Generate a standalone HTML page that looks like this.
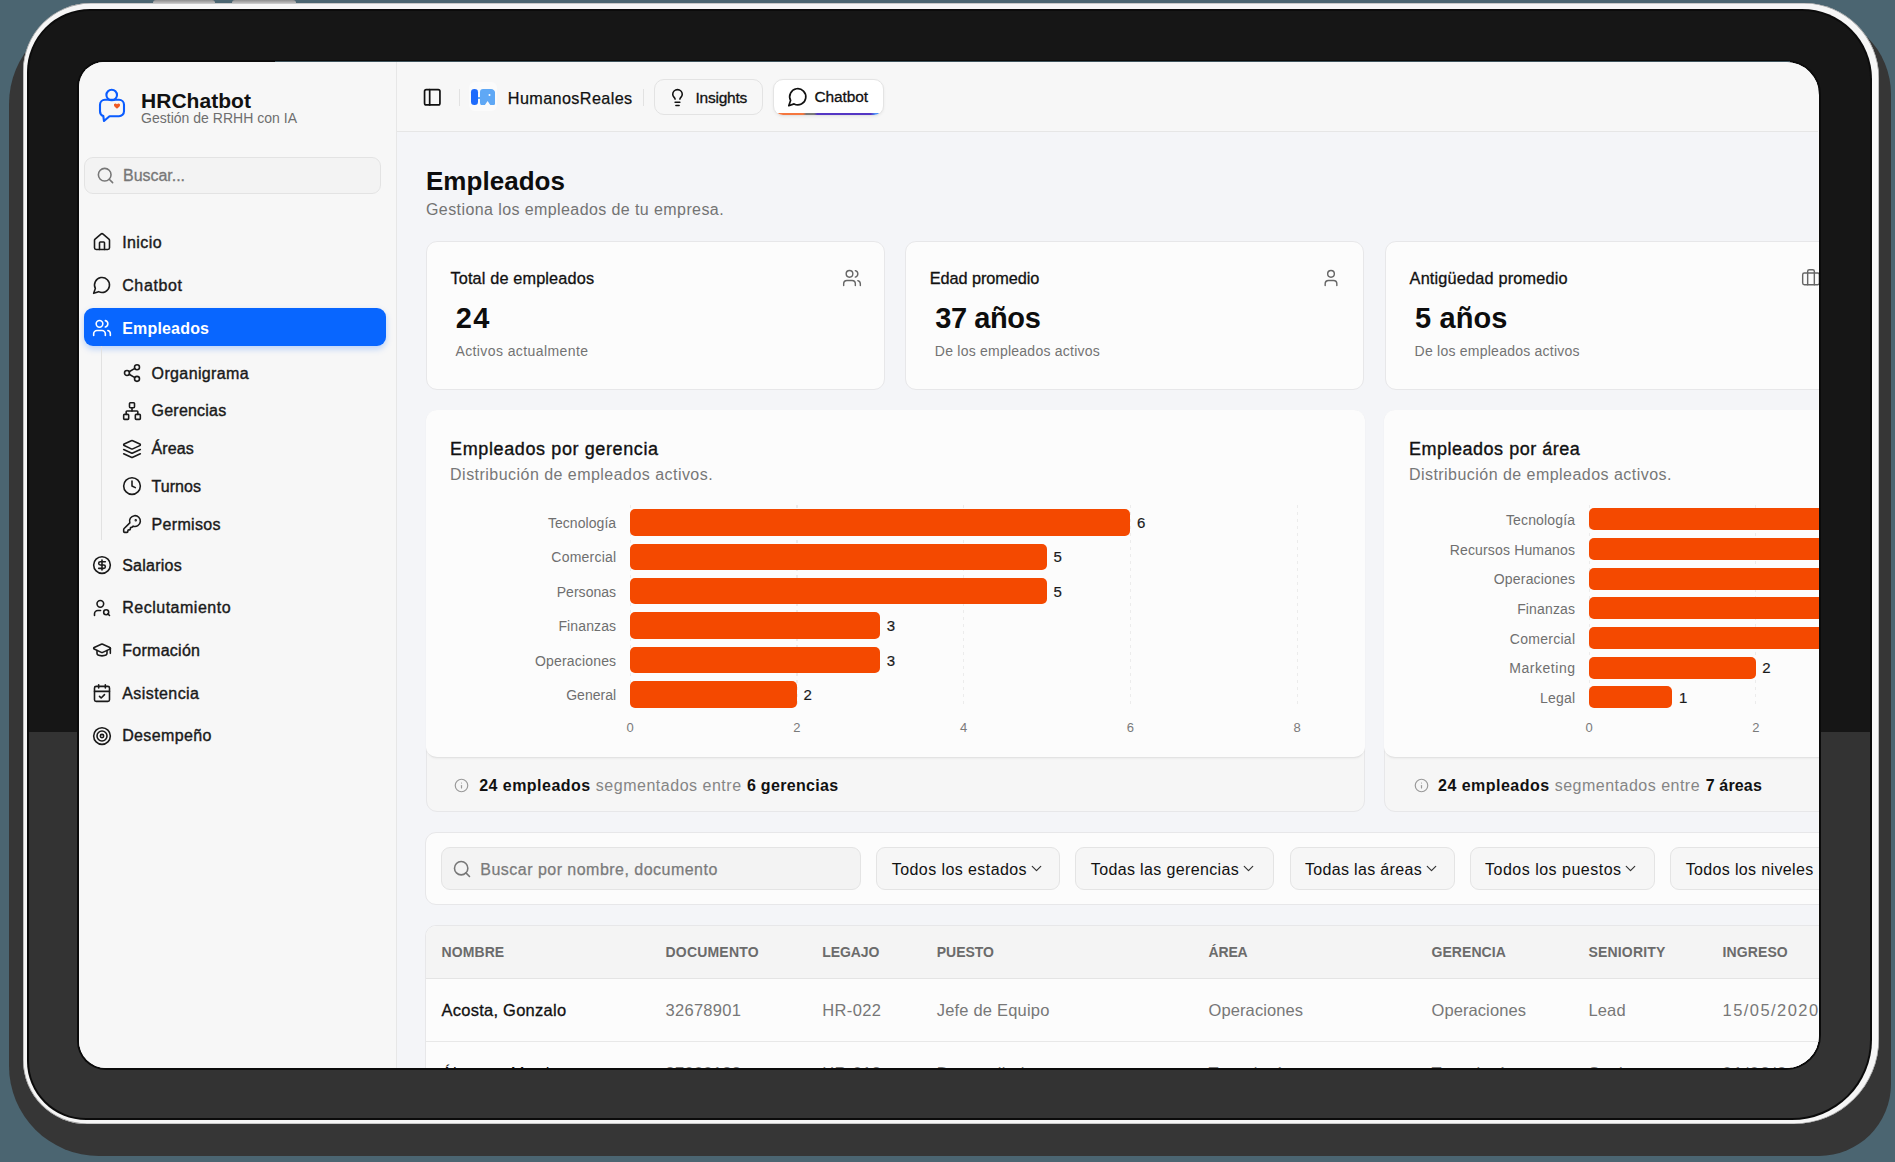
<!DOCTYPE html>
<html><head><meta charset="utf-8">
<style>
html,body{margin:0;padding:0;}
body{width:1895px;height:1162px;position:relative;overflow:hidden;background:#4b6571;font-family:"Liberation Sans",sans-serif;}
.t{position:absolute;white-space:nowrap;line-height:1;}
#shadow{position:absolute;left:8.5px;top:14px;width:1882.5px;height:1141.5px;border-radius:90px 80px 72px 90px;background:#363636;}
#rim{position:absolute;left:22.5px;top:3px;width:1856.5px;height:1121px;border-radius:68px 75px 85px 64px;background:#f6f6f6;box-shadow:inset 0 0 0 0.6px #9a9a9a;}
#bez{position:absolute;left:26.5px;top:8.5px;width:1845px;height:1111.5px;border-radius:63px 70px 80px 59px;background:#0b0b0b;overflow:hidden;}
#bez1{position:absolute;left:2px;top:2px;right:2px;bottom:2px;border-radius:61px 68px 78px 57px;background:linear-gradient(#161616 0,#161616 721.5px,#333 721.5px);}
#sring{position:absolute;left:76.5px;top:60px;width:1744px;height:1010px;border-radius:27px 35px 35px 29px;background:#0b0b0b;}
#screen{position:absolute;left:78.5px;top:62px;width:1740px;height:1006px;border-radius:25px 33px 33px 27px;overflow:hidden;background:#f7f7f7;}
#layer{position:absolute;left:-78.5px;top:-62px;width:1895px;height:1162px;}
</style></head><body>
<div id="shadow"></div>
<div style="position:absolute;left:153px;top:0;width:62px;height:5px;border-radius:3px 3px 0 0;background:linear-gradient(#8d8d8d,#d9d9d9);"></div>
<div style="position:absolute;left:232px;top:0;width:64px;height:5px;border-radius:3px 3px 0 0;background:linear-gradient(#8d8d8d,#d9d9d9);"></div>
<div id="rim"></div>
<div id="bez"><div id="bez1"></div></div>
<div id="sring"></div>
<div style="position:absolute;left:275px;top:61px;width:1515px;height:1px;background:#4b6571;opacity:0.8"></div>
<div id="screen"><div id="layer">
<div style="position:absolute;left:78px;top:62px;width:318.5px;height:1006px;background:#f7f7f7;"></div>
<div style="position:absolute;left:396px;top:62px;width:1px;height:1006px;background:#e7e7e7;"></div>
<div style="position:absolute;left:397px;top:62px;width:1421px;height:69px;background:#f7f7f7;"></div>
<div style="position:absolute;left:397px;top:130.5px;width:1421px;height:1px;background:#e6e6e6;"></div>
<div style="position:absolute;left:397px;top:131.5px;width:1421px;height:937px;background:#f4f5f8;"></div>
<svg style="position:absolute;left:96px;top:86px;width:32px;height:38px" viewBox="0 0 32 38" fill="none" stroke="#0a5cff" stroke-width="2.1" stroke-linejoin="round"><circle cx="15.7" cy="9" r="5.3"/><path d="M9 13.7 H23 a5 5 0 0 1 5 5 V25.2 a5 5 0 0 1 -5 5 H13.5 L8 35 L7.3 30 a5 5 0 0 1 -3.3 -4.8 V18.7 a5 5 0 0 1 5 -5 Z"/><path d="M21 18.3 c-1.2 -1.6 -3.6 -0.6 -3 1.2 c0.4 1.2 2 2.4 3 3.3 c1 -0.9 2.6 -2.1 3 -3.3 c0.6 -1.8 -1.8 -2.8 -3 -1.2z" fill="#f05a22" stroke="none"/></svg>
<div style="position:absolute;left:84px;top:156.5px;width:297px;height:37.5px;box-sizing:border-box;border:1px solid #e3e3e3;border-radius:9px;background:#f3f3f3;"></div>
<svg style="position:absolute;left:95.5px;top:166px;width:19px;height:19px;" viewBox="0 0 24 24" fill="none" stroke="#777" stroke-width="2" stroke-linecap="round" stroke-linejoin="round"><circle cx="11" cy="11" r="8"/><path d="m21 21-4.3-4.3"/></svg>
<svg style="position:absolute;left:92px;top:232.2px;width:20px;height:20px;" viewBox="0 0 24 24" fill="none" stroke="#1a1a1a" stroke-width="1.9" stroke-linecap="round" stroke-linejoin="round"><path d="M15 21v-8a1 1 0 0 0-1-1h-4a1 1 0 0 0-1 1v8"/><path d="M3 10a2 2 0 0 1 .709-1.528l7-5.999a2 2 0 0 1 2.582 0l7 5.999A2 2 0 0 1 21 10v9a2 2 0 0 1-2 2H5a2 2 0 0 1-2-2z"/></svg>
<svg style="position:absolute;left:92px;top:275.1px;width:20px;height:20px;" viewBox="0 0 24 24" fill="none" stroke="#1a1a1a" stroke-width="1.9" stroke-linecap="round" stroke-linejoin="round"><path d="M7.9 20A9 9 0 1 0 4 16.1L2 22Z"/></svg>
<div style="position:absolute;left:84px;top:308.2px;width:302px;height:38px;background:#0866ff;border-radius:9px;box-shadow:0 3px 6px rgba(8,102,255,0.25);"></div>
<svg style="position:absolute;left:92px;top:318.0px;width:20px;height:20px;" viewBox="0 0 24 24" fill="none" stroke="#ffffff" stroke-width="1.9" stroke-linecap="round" stroke-linejoin="round"><path d="M16 21v-2a4 4 0 0 0-4-4H6a4 4 0 0 0-4 4v2"/><circle cx="9" cy="7" r="4"/><path d="M22 21v-2a4 4 0 0 0-3-3.87"/><path d="M16 3.13a4 4 0 0 1 0 7.75"/></svg>
<div style="position:absolute;left:101px;top:346px;width:1px;height:194px;background:#e2e2e2;"></div>
<svg style="position:absolute;left:121.5px;top:363.0px;width:20px;height:20px;" viewBox="0 0 24 24" fill="none" stroke="#1a1a1a" stroke-width="1.9" stroke-linecap="round" stroke-linejoin="round"><circle cx="18" cy="5" r="3"/><circle cx="6" cy="12" r="3"/><circle cx="18" cy="19" r="3"/><line x1="8.59" x2="15.42" y1="13.51" y2="17.49"/><line x1="15.41" x2="8.59" y1="6.51" y2="10.49"/></svg>
<svg style="position:absolute;left:121.5px;top:400.8px;width:20px;height:20px;" viewBox="0 0 24 24" fill="none" stroke="#1a1a1a" stroke-width="1.9" stroke-linecap="round" stroke-linejoin="round"><rect x="16" y="16" width="6" height="6" rx="1"/><rect x="2" y="16" width="6" height="6" rx="1"/><rect x="9" y="2" width="6" height="6" rx="1"/><path d="M5 16v-3a1 1 0 0 1 1-1h12a1 1 0 0 1 1 1v3"/><path d="M12 12V8"/></svg>
<svg style="position:absolute;left:121.5px;top:438.5px;width:20px;height:20px;" viewBox="0 0 24 24" fill="none" stroke="#1a1a1a" stroke-width="1.9" stroke-linecap="round" stroke-linejoin="round"><path d="m12.83 2.18a2 2 0 0 0-1.66 0L2.6 6.08a1 1 0 0 0 0 1.83l8.58 3.91a2 2 0 0 0 1.66 0l8.58-3.9a1 1 0 0 0 0-1.83Z"/><path d="m22 17.65-9.17 4.16a2 2 0 0 1-1.66 0L2 17.65"/><path d="m22 12.65-9.17 4.16a2 2 0 0 1-1.66 0L2 12.65"/></svg>
<svg style="position:absolute;left:121.5px;top:476.3px;width:20px;height:20px;" viewBox="0 0 24 24" fill="none" stroke="#1a1a1a" stroke-width="1.9" stroke-linecap="round" stroke-linejoin="round"><circle cx="12" cy="12" r="10"/><polyline points="12 6 12 12 16 14"/></svg>
<svg style="position:absolute;left:121.5px;top:514.2px;width:20px;height:20px;" viewBox="0 0 24 24" fill="none" stroke="#1a1a1a" stroke-width="1.9" stroke-linecap="round" stroke-linejoin="round"><path d="M2.586 17.414A2 2 0 0 0 2 18.828V21a1 1 0 0 0 1 1h3a1 1 0 0 0 1-1v-1a1 1 0 0 1 1-1h1a1 1 0 0 0 1-1v-1a1 1 0 0 1 1-1h.172a2 2 0 0 0 1.414-.586l.814-.814a6.5 6.5 0 1 0-4-4z"/><circle cx="16.5" cy="7.5" r=".5" fill="currentColor"/></svg>
<svg style="position:absolute;left:92px;top:555.3px;width:20px;height:20px;" viewBox="0 0 24 24" fill="none" stroke="#1a1a1a" stroke-width="1.9" stroke-linecap="round" stroke-linejoin="round"><circle cx="12" cy="12" r="10"/><path d="M16 8h-6a2 2 0 1 0 0 4h4a2 2 0 1 1 0 4H8"/><path d="M12 18V6"/></svg>
<svg style="position:absolute;left:92px;top:597.8px;width:20px;height:20px;" viewBox="0 0 24 24" fill="none" stroke="#1a1a1a" stroke-width="1.9" stroke-linecap="round" stroke-linejoin="round"><circle cx="10" cy="7" r="4"/><path d="M10.3 15H7a4 4 0 0 0-4 4v2"/><circle cx="17" cy="17" r="3"/><path d="m21 21-1.9-1.9"/></svg>
<svg style="position:absolute;left:92px;top:640.0px;width:20px;height:20px;" viewBox="0 0 24 24" fill="none" stroke="#1a1a1a" stroke-width="1.9" stroke-linecap="round" stroke-linejoin="round"><path d="M21.42 10.922a1 1 0 0 0-.019-1.838L12.83 5.18a2 2 0 0 0-1.66 0L2.6 9.08a1 1 0 0 0 0 1.832l8.57 3.908a2 2 0 0 0 1.66 0z"/><path d="M22 10v6"/><path d="M6 12.5V16a6 3 0 0 0 12 0v-3.5"/></svg>
<svg style="position:absolute;left:92px;top:683.2px;width:20px;height:20px;" viewBox="0 0 24 24" fill="none" stroke="#1a1a1a" stroke-width="1.9" stroke-linecap="round" stroke-linejoin="round"><path d="M8 2v4"/><path d="M16 2v4"/><rect width="18" height="18" x="3" y="4" rx="2"/><path d="M3 10h18"/><path d="m9 16 2 2 4-4"/></svg>
<svg style="position:absolute;left:92px;top:725.7px;width:20px;height:20px;" viewBox="0 0 24 24" fill="none" stroke="#1a1a1a" stroke-width="1.9" stroke-linecap="round" stroke-linejoin="round"><circle cx="12" cy="12" r="10"/><circle cx="12" cy="12" r="6"/><circle cx="12" cy="12" r="2"/></svg>
<svg style="position:absolute;left:422.3px;top:86.8px;width:20.5px;height:20.5px;" viewBox="0 0 24 24" fill="none" stroke="#111" stroke-width="2" stroke-linecap="round" stroke-linejoin="round"><rect width="18" height="18" x="3" y="3" rx="2"/><path d="M9 3v18"/></svg>
<div style="position:absolute;left:458.5px;top:89px;width:1px;height:17px;background:#e2e2e2;"></div>
<div style="position:absolute;left:468.7px;top:82px;width:28.3px;height:28.7px;background:#fbfbfb;border-radius:6px;"></div>
<div style="position:absolute;left:471.2px;top:88.8px;width:6.6px;height:16.6px;background:#1f6cfc;border-radius:3.3px;"></div>
<div style="position:absolute;left:477.5px;top:96.5px;width:3px;height:2px;background:#5fa8f5;"></div>
<svg style="position:absolute;left:480px;top:88.8px;width:15.2px;height:16.6px" viewBox="0 0 15.2 16.6"><path d="M3 0 H11 a4.2 4.2 0 0 1 4.2 4.2 V13.6 a3 3 0 0 1 -3 3 a3 3 0 0 1 -2.6 -1.5 L7.6 12 L5.6 15.1 a3 3 0 0 1 -2.6 1.5 a3 3 0 0 1 -3 -3 V3 a3 3 0 0 1 3 -3z" fill="#5fa8f5"/><circle cx="9.5" cy="6" r="1" fill="#fff"/></svg>
<div style="position:absolute;left:642.5px;top:89px;width:1px;height:17px;background:#e2e2e2;"></div>
<div style="position:absolute;left:653.5px;top:78.5px;width:109px;height:36.5px;box-sizing:border-box;border:1px solid #e3e3e3;border-radius:10px;background:#f7f7f7;"></div>
<svg style="position:absolute;left:668px;top:87.5px;width:19px;height:19px;" viewBox="0 0 24 24" fill="none" stroke="#111" stroke-width="2" stroke-linecap="round" stroke-linejoin="round"><path d="M15 14c.2-1 .7-1.7 1.5-2.5 1-.9 1.5-2.2 1.5-3.5A6 6 0 0 0 6 8c0 1 .2 2.2 1.5 3.5.7.7 1.3 1.5 1.5 2.5"/><path d="M9 18h6"/><path d="M10 22h4"/></svg>
<div style="position:absolute;left:773.3px;top:78.6px;width:111px;height:37px;box-sizing:border-box;border:1px solid #e4e4e4;border-radius:10px;background:#ffffff;box-shadow:0 1px 3px rgba(0,0,0,0.06);overflow:hidden;"><div style="position:absolute;left:-1px;right:-1px;bottom:-1px;height:2.6px;background:linear-gradient(90deg,#f5773f 0%,#f5773f 27%,#7a7a7a 30%,#7a7a7a 37%,#5436c4 40%,#5436c4 88%,#4d8ff5 92%,#4d8ff5 100%);"></div></div>
<svg style="position:absolute;left:786.5px;top:85.5px;width:21.5px;height:21.5px;" viewBox="0 0 24 24" fill="none" stroke="#111" stroke-width="1.9" stroke-linecap="round" stroke-linejoin="round"><path d="M7.9 20A9 9 0 1 0 4 16.1L2 22Z"/></svg>
<div style="position:absolute;left:425.6px;top:241px;width:459.4px;height:149px;box-sizing:border-box;border:1px solid #e7e7e9;border-radius:11px;background:#fcfcfc;"></div>
<svg style="position:absolute;left:841.6px;top:267.5px;width:20px;height:20px;" viewBox="0 0 24 24" fill="none" stroke="#666" stroke-width="1.7" stroke-linecap="round" stroke-linejoin="round"><path d="M16 21v-2a4 4 0 0 0-4-4H6a4 4 0 0 0-4 4v2"/><circle cx="9" cy="7" r="4"/><path d="M22 21v-2a4 4 0 0 0-3-3.87"/><path d="M16 3.13a4 4 0 0 1 0 7.75"/></svg>
<div style="position:absolute;left:905px;top:241px;width:459px;height:149px;box-sizing:border-box;border:1px solid #e7e7e9;border-radius:11px;background:#fcfcfc;"></div>
<svg style="position:absolute;left:1321px;top:267.5px;width:20px;height:20px;" viewBox="0 0 24 24" fill="none" stroke="#666" stroke-width="1.7" stroke-linecap="round" stroke-linejoin="round"><path d="M19 21v-2a4 4 0 0 0-4-4H9a4 4 0 0 0-4 4v2"/><circle cx="12" cy="7" r="4"/></svg>
<div style="position:absolute;left:1384.8px;top:241px;width:515.2px;height:149px;box-sizing:border-box;border:1px solid #e7e7e9;border-radius:11px;background:#fcfcfc;"></div>
<svg style="position:absolute;left:1800.8px;top:268.3px;width:20px;height:20px;" viewBox="0 0 24 24" fill="none" stroke="#666" stroke-width="1.7" stroke-linecap="round" stroke-linejoin="round"><path d="M16 20V4a2 2 0 0 0-2-2h-4a2 2 0 0 0-2 2v16"/><rect width="20" height="14" x="2" y="6" rx="2"/></svg>
<div style="position:absolute;left:425.6px;top:410px;width:939.4px;height:402px;box-sizing:border-box;border:1px solid #e7e7e9;border-radius:11px;background:#f6f6f6;"></div>
<div style="position:absolute;left:425.6px;top:410px;width:939.4px;height:347.5px;box-sizing:border-box;border-bottom:1px solid #e3e3e3;border-radius:11px;background:#fcfcfc;box-shadow:0 1px 2px rgba(0,0,0,0.04);"></div>
<div style="position:absolute;left:629.6px;top:505px;width:1.2px;height:203px;background:repeating-linear-gradient(#ececec 0 3.5px,transparent 3.5px 7px);"></div>
<div style="position:absolute;left:796.4px;top:505px;width:1.2px;height:203px;background:repeating-linear-gradient(#ececec 0 3.5px,transparent 3.5px 7px);"></div>
<div style="position:absolute;left:963.1px;top:505px;width:1.2px;height:203px;background:repeating-linear-gradient(#ececec 0 3.5px,transparent 3.5px 7px);"></div>
<div style="position:absolute;left:1129.9px;top:505px;width:1.2px;height:203px;background:repeating-linear-gradient(#ececec 0 3.5px,transparent 3.5px 7px);"></div>
<div style="position:absolute;left:1296.6px;top:505px;width:1.2px;height:203px;background:repeating-linear-gradient(#ececec 0 3.5px,transparent 3.5px 7px);"></div>
<div style="position:absolute;left:630.2px;top:509.2px;width:500.28px;height:26.4px;background:#f44900;border-radius:5px;"></div>
<div style="position:absolute;left:630.2px;top:543.5999999999999px;width:416.9px;height:26.4px;background:#f44900;border-radius:5px;"></div>
<div style="position:absolute;left:630.2px;top:577.9999999999999px;width:416.9px;height:26.4px;background:#f44900;border-radius:5px;"></div>
<div style="position:absolute;left:630.2px;top:612.3999999999999px;width:250.14px;height:26.4px;background:#f44900;border-radius:5px;"></div>
<div style="position:absolute;left:630.2px;top:646.8px;width:250.14px;height:26.4px;background:#f44900;border-radius:5px;"></div>
<div style="position:absolute;left:630.2px;top:681.1999999999999px;width:166.76px;height:26.4px;background:#f44900;border-radius:5px;"></div>
<svg style="position:absolute;left:454.1px;top:778px;width:15px;height:15px;" viewBox="0 0 24 24" fill="none" stroke="#9a9a9a" stroke-width="1.9" stroke-linecap="round" stroke-linejoin="round"><circle cx="12" cy="12" r="10"/><path d="M12 16v-4"/><path d="M12 8h.01"/></svg>
<div style="position:absolute;left:1384.4px;top:410px;width:515.5999999999999px;height:402px;box-sizing:border-box;border:1px solid #e7e7e9;border-radius:11px;background:#f6f6f6;"></div>
<div style="position:absolute;left:1384.4px;top:410px;width:515.5999999999999px;height:347.5px;box-sizing:border-box;border-bottom:1px solid #e3e3e3;border-radius:11px;background:#fcfcfc;box-shadow:0 1px 2px rgba(0,0,0,0.04);"></div>
<div style="position:absolute;left:1588.5px;top:505px;width:1.2px;height:203px;background:repeating-linear-gradient(#ececec 0 3.5px,transparent 3.5px 7px);"></div>
<div style="position:absolute;left:1755.3px;top:505px;width:1.2px;height:203px;background:repeating-linear-gradient(#ececec 0 3.5px,transparent 3.5px 7px);"></div>
<div style="position:absolute;left:1922.0px;top:505px;width:1.2px;height:203px;background:repeating-linear-gradient(#ececec 0 3.5px,transparent 3.5px 7px);"></div>
<div style="position:absolute;left:1589.1px;top:508.29999999999995px;width:500.28px;height:22px;background:#f44900;border-radius:5px;"></div>
<div style="position:absolute;left:1589.1px;top:537.9799999999999px;width:500.28px;height:22px;background:#f44900;border-radius:5px;"></div>
<div style="position:absolute;left:1589.1px;top:567.66px;width:500.28px;height:22px;background:#f44900;border-radius:5px;"></div>
<div style="position:absolute;left:1589.1px;top:597.3399999999999px;width:500.28px;height:22px;background:#f44900;border-radius:5px;"></div>
<div style="position:absolute;left:1589.1px;top:627.02px;width:500.28px;height:22px;background:#f44900;border-radius:5px;"></div>
<div style="position:absolute;left:1589.1px;top:656.6999999999999px;width:166.76px;height:22px;background:#f44900;border-radius:5px;"></div>
<div style="position:absolute;left:1589.1px;top:686.3799999999999px;width:83.38px;height:22px;background:#f44900;border-radius:5px;"></div>
<svg style="position:absolute;left:1413.9px;top:778px;width:15px;height:15px;" viewBox="0 0 24 24" fill="none" stroke="#9a9a9a" stroke-width="1.9" stroke-linecap="round" stroke-linejoin="round"><circle cx="12" cy="12" r="10"/><path d="M12 16v-4"/><path d="M12 8h.01"/></svg>
<div style="position:absolute;left:425.4px;top:832.2px;width:1500px;height:72.5px;box-sizing:border-box;border:1px solid #e7e7e9;border-radius:11px;background:#fcfcfc;"></div>
<div style="position:absolute;left:440.8px;top:847.2px;width:420.5px;height:42.4px;box-sizing:border-box;border:1px solid #e4e4e4;border-radius:9px;background:#f3f3f3;"></div>
<svg style="position:absolute;left:451.5px;top:858.5px;width:20px;height:20px;" viewBox="0 0 24 24" fill="none" stroke="#777" stroke-width="1.9" stroke-linecap="round" stroke-linejoin="round"><circle cx="11" cy="11" r="8"/><path d="m21 21-4.3-4.3"/></svg>
<div style="position:absolute;left:876.4px;top:847.2px;width:184.10000000000002px;height:42.4px;box-sizing:border-box;border:1px solid #e4e4e4;border-radius:9px;background:#f6f6f6;"></div>
<svg style="position:absolute;left:1027.5px;top:860px;width:17px;height:17px;" viewBox="0 0 24 24" fill="none" stroke="#333" stroke-width="1.7" stroke-linecap="round" stroke-linejoin="round"><path d="m6 9 6 6 6-6"/></svg>
<div style="position:absolute;left:1075.4px;top:847.2px;width:198.69999999999982px;height:42.4px;box-sizing:border-box;border:1px solid #e4e4e4;border-radius:9px;background:#f6f6f6;"></div>
<svg style="position:absolute;left:1239.6000000000001px;top:860px;width:17px;height:17px;" viewBox="0 0 24 24" fill="none" stroke="#333" stroke-width="1.7" stroke-linecap="round" stroke-linejoin="round"><path d="m6 9 6 6 6-6"/></svg>
<div style="position:absolute;left:1289.6px;top:847.2px;width:165.4000000000001px;height:42.4px;box-sizing:border-box;border:1px solid #e4e4e4;border-radius:9px;background:#f6f6f6;"></div>
<svg style="position:absolute;left:1422.5px;top:860px;width:17px;height:17px;" viewBox="0 0 24 24" fill="none" stroke="#333" stroke-width="1.7" stroke-linecap="round" stroke-linejoin="round"><path d="m6 9 6 6 6-6"/></svg>
<div style="position:absolute;left:1469.6px;top:847.2px;width:185.70000000000005px;height:42.4px;box-sizing:border-box;border:1px solid #e4e4e4;border-radius:9px;background:#f6f6f6;"></div>
<svg style="position:absolute;left:1622.1px;top:860px;width:17px;height:17px;" viewBox="0 0 24 24" fill="none" stroke="#333" stroke-width="1.7" stroke-linecap="round" stroke-linejoin="round"><path d="m6 9 6 6 6-6"/></svg>
<div style="position:absolute;left:1670.3px;top:847.2px;width:229.70000000000005px;height:42.4px;box-sizing:border-box;border:1px solid #e4e4e4;border-radius:9px;background:#f6f6f6;"></div>
<div style="position:absolute;left:425.4px;top:925px;width:1500px;height:400px;box-sizing:border-box;border:1px solid #e7e7e9;border-radius:11px;background:#fcfcfc;overflow:hidden;"></div>
<div style="position:absolute;left:426.4px;top:926px;width:1500px;height:52.4px;background:#f4f4f4;border-radius:10px 0 0 0;"></div>
<div style="position:absolute;left:426.4px;top:978px;width:1500px;height:1px;background:#e4e4e4;"></div>
<div style="position:absolute;left:426.4px;top:1041px;width:1500px;height:1px;background:#e8e8e8;"></div>
<div class="t" style="top:90.02px;font-size:21px;color:#111;font-weight:700;letter-spacing:0.040px;left:141.00px;">HRChatbot</div>
<div class="t" style="top:111.35px;font-size:14px;color:#6e6e6e;letter-spacing:0.017px;left:141.00px;">Gestión de RRHH con IA</div>
<div class="t" style="top:167.96px;font-size:16px;color:#777;letter-spacing:-0.028px;-webkit-text-stroke:0.3px #777;left:123.00px;">Buscar...</div>
<div class="t" style="top:234.86px;font-size:16px;color:#1a1a1a;letter-spacing:0.408px;-webkit-text-stroke:0.4px #1a1a1a;left:122.20px;">Inicio</div>
<div class="t" style="top:277.76px;font-size:16px;color:#1a1a1a;letter-spacing:0.623px;-webkit-text-stroke:0.4px #1a1a1a;left:122.20px;">Chatbot</div>
<div class="t" style="top:320.66px;font-size:16px;color:#ffffff;font-weight:700;letter-spacing:0.182px;left:122.20px;">Empleados</div>
<div class="t" style="top:365.66px;font-size:16px;color:#1a1a1a;letter-spacing:0.366px;-webkit-text-stroke:0.4px #1a1a1a;left:151.60px;">Organigrama</div>
<div class="t" style="top:403.46px;font-size:16px;color:#1a1a1a;letter-spacing:0.209px;-webkit-text-stroke:0.4px #1a1a1a;left:151.60px;">Gerencias</div>
<div class="t" style="top:441.16px;font-size:16px;color:#1a1a1a;letter-spacing:0.081px;-webkit-text-stroke:0.4px #1a1a1a;left:151.60px;">Áreas</div>
<div class="t" style="top:478.96px;font-size:16px;color:#1a1a1a;letter-spacing:0.016px;-webkit-text-stroke:0.4px #1a1a1a;left:151.60px;">Turnos</div>
<div class="t" style="top:516.86px;font-size:16px;color:#1a1a1a;letter-spacing:0.315px;-webkit-text-stroke:0.4px #1a1a1a;left:151.60px;">Permisos</div>
<div class="t" style="top:557.96px;font-size:16px;color:#1a1a1a;letter-spacing:0.237px;-webkit-text-stroke:0.4px #1a1a1a;left:122.20px;">Salarios</div>
<div class="t" style="top:600.46px;font-size:16px;color:#1a1a1a;letter-spacing:0.510px;-webkit-text-stroke:0.4px #1a1a1a;left:122.20px;">Reclutamiento</div>
<div class="t" style="top:642.66px;font-size:16px;color:#1a1a1a;letter-spacing:0.280px;-webkit-text-stroke:0.4px #1a1a1a;left:122.20px;">Formación</div>
<div class="t" style="top:685.86px;font-size:16px;color:#1a1a1a;letter-spacing:0.428px;-webkit-text-stroke:0.4px #1a1a1a;left:122.20px;">Asistencia</div>
<div class="t" style="top:728.36px;font-size:16px;color:#1a1a1a;letter-spacing:0.359px;-webkit-text-stroke:0.4px #1a1a1a;left:122.20px;">Desempeño</div>
<div class="t" style="top:89.79px;font-size:16.2px;color:#111;letter-spacing:0.396px;-webkit-text-stroke:0.25px #111;left:507.80px;">HumanosReales</div>
<div class="t" style="top:89.78px;font-size:15.5px;color:#111;letter-spacing:-0.240px;-webkit-text-stroke:0.3px #111;left:695.50px;">Insights</div>
<div class="t" style="top:89.48px;font-size:15.5px;color:#111;letter-spacing:-0.113px;-webkit-text-stroke:0.3px #111;left:814.50px;">Chatbot</div>
<div class="t" style="top:167.59px;font-size:26px;color:#0d0d0d;font-weight:700;letter-spacing:0.032px;left:426.00px;">Empleados</div>
<div class="t" style="top:202.46px;font-size:16px;color:#737373;letter-spacing:0.410px;left:426.00px;">Gestiona los empleados de tu empresa.</div>
<div class="t" style="top:270.00px;font-size:16.3px;color:#111;letter-spacing:0.146px;-webkit-text-stroke:0.3px #111;left:450.40px;">Total de empleados</div>
<div class="t" style="top:304.25px;font-size:29px;color:#0d0d0d;font-weight:700;letter-spacing:1.372px;left:455.80px;">24</div>
<div class="t" style="top:343.85px;font-size:14px;color:#737373;letter-spacing:0.406px;left:455.40px;">Activos actualmente</div>
<div class="t" style="top:270.00px;font-size:16.3px;color:#111;letter-spacing:-0.081px;-webkit-text-stroke:0.3px #111;left:929.80px;">Edad promedio</div>
<div class="t" style="top:304.25px;font-size:29px;color:#0d0d0d;font-weight:700;letter-spacing:-0.400px;left:935.20px;">37 años</div>
<div class="t" style="top:343.85px;font-size:14px;color:#737373;letter-spacing:0.237px;left:934.80px;">De los empleados activos</div>
<div class="t" style="top:270.00px;font-size:16.3px;color:#111;letter-spacing:0.175px;-webkit-text-stroke:0.3px #111;left:1409.60px;">Antigüedad promedio</div>
<div class="t" style="top:304.25px;font-size:29px;color:#0d0d0d;font-weight:700;letter-spacing:0.122px;left:1415.00px;">5 años</div>
<div class="t" style="top:343.85px;font-size:14px;color:#737373;letter-spacing:0.237px;left:1414.60px;">De los empleados activos</div>
<div class="t" style="top:439.96px;font-size:18px;color:#111;letter-spacing:0.613px;-webkit-text-stroke:0.35px #111;left:450.10px;">Empleados por gerencia</div>
<div class="t" style="top:466.86px;font-size:16px;color:#777;letter-spacing:0.464px;left:450.10px;">Distribución de empleados activos.</div>
<div class="t" style="top:720.60px;font-size:13px;color:#7a7a7a;left:130.20px;width:1000px;text-align:center;">0</div>
<div class="t" style="top:720.60px;font-size:13px;color:#7a7a7a;left:296.96px;width:1000px;text-align:center;">2</div>
<div class="t" style="top:720.60px;font-size:13px;color:#7a7a7a;left:463.72px;width:1000px;text-align:center;">4</div>
<div class="t" style="top:720.60px;font-size:13px;color:#7a7a7a;left:630.48px;width:1000px;text-align:center;">6</div>
<div class="t" style="top:720.60px;font-size:13px;color:#7a7a7a;left:797.24px;width:1000px;text-align:center;">8</div>
<div class="t" style="top:515.95px;font-size:14px;color:#6f6f6f;letter-spacing:0.058px;right:1278.84px;">Tecnología</div>
<div class="t" style="top:514.90px;font-size:15px;color:#1a1a1a;-webkit-text-stroke:0.2px #1a1a1a;left:1136.98px;">6</div>
<div class="t" style="top:550.35px;font-size:14px;color:#6f6f6f;letter-spacing:0.221px;right:1278.68px;">Comercial</div>
<div class="t" style="top:549.30px;font-size:15px;color:#1a1a1a;-webkit-text-stroke:0.2px #1a1a1a;left:1053.60px;">5</div>
<div class="t" style="top:584.75px;font-size:14px;color:#6f6f6f;letter-spacing:0.032px;right:1278.87px;">Personas</div>
<div class="t" style="top:583.70px;font-size:15px;color:#1a1a1a;-webkit-text-stroke:0.2px #1a1a1a;left:1053.60px;">5</div>
<div class="t" style="top:619.15px;font-size:14px;color:#6f6f6f;letter-spacing:0.124px;right:1278.78px;">Finanzas</div>
<div class="t" style="top:618.10px;font-size:15px;color:#1a1a1a;-webkit-text-stroke:0.2px #1a1a1a;left:886.84px;">3</div>
<div class="t" style="top:653.55px;font-size:14px;color:#6f6f6f;letter-spacing:0.166px;right:1278.73px;">Operaciones</div>
<div class="t" style="top:652.50px;font-size:15px;color:#1a1a1a;-webkit-text-stroke:0.2px #1a1a1a;left:886.84px;">3</div>
<div class="t" style="top:687.95px;font-size:14px;color:#6f6f6f;letter-spacing:0.013px;right:1278.89px;">General</div>
<div class="t" style="top:686.90px;font-size:15px;color:#1a1a1a;-webkit-text-stroke:0.2px #1a1a1a;left:803.46px;">2</div>
<div class="t" style="top:439.96px;font-size:18px;color:#111;letter-spacing:0.522px;-webkit-text-stroke:0.35px #111;left:1408.90px;">Empleados por área</div>
<div class="t" style="top:466.86px;font-size:16px;color:#777;letter-spacing:0.464px;left:1408.90px;">Distribución de empleados activos.</div>
<div class="t" style="top:720.60px;font-size:13px;color:#7a7a7a;left:1089.10px;width:1000px;text-align:center;">0</div>
<div class="t" style="top:720.60px;font-size:13px;color:#7a7a7a;left:1255.86px;width:1000px;text-align:center;">2</div>
<div class="t" style="top:720.60px;font-size:13px;color:#7a7a7a;left:1422.62px;width:1000px;text-align:center;">4</div>
<div class="t" style="top:512.85px;font-size:14px;color:#6f6f6f;letter-spacing:0.148px;right:319.85px;">Tecnología</div>
<div class="t" style="top:511.80px;font-size:15px;color:#1a1a1a;-webkit-text-stroke:0.2px #1a1a1a;left:2095.88px;">6</div>
<div class="t" style="top:542.53px;font-size:14px;color:#6f6f6f;letter-spacing:0.154px;right:319.85px;">Recursos Humanos</div>
<div class="t" style="top:541.48px;font-size:15px;color:#1a1a1a;-webkit-text-stroke:0.2px #1a1a1a;left:2095.88px;">6</div>
<div class="t" style="top:572.21px;font-size:14px;color:#6f6f6f;letter-spacing:0.184px;right:319.82px;">Operaciones</div>
<div class="t" style="top:571.16px;font-size:15px;color:#1a1a1a;-webkit-text-stroke:0.2px #1a1a1a;left:2095.88px;">6</div>
<div class="t" style="top:601.89px;font-size:14px;color:#6f6f6f;letter-spacing:0.149px;right:319.85px;">Finanzas</div>
<div class="t" style="top:600.84px;font-size:15px;color:#1a1a1a;-webkit-text-stroke:0.2px #1a1a1a;left:2095.88px;">6</div>
<div class="t" style="top:631.57px;font-size:14px;color:#6f6f6f;letter-spacing:0.276px;right:319.72px;">Comercial</div>
<div class="t" style="top:630.52px;font-size:15px;color:#1a1a1a;-webkit-text-stroke:0.2px #1a1a1a;left:2095.88px;">6</div>
<div class="t" style="top:661.25px;font-size:14px;color:#6f6f6f;letter-spacing:0.526px;right:319.47px;">Marketing</div>
<div class="t" style="top:660.20px;font-size:15px;color:#1a1a1a;-webkit-text-stroke:0.2px #1a1a1a;left:1762.36px;">2</div>
<div class="t" style="top:690.93px;font-size:14px;color:#6f6f6f;letter-spacing:0.169px;right:319.83px;">Legal</div>
<div class="t" style="top:689.88px;font-size:15px;color:#1a1a1a;-webkit-text-stroke:0.2px #1a1a1a;left:1678.98px;">1</div>
<div class="t" style="top:778.26px;font-size:16px;color:#111;font-weight:700;letter-spacing:0.464px;left:479.20px;">24 empleados</div>
<div class="t" style="top:778.26px;font-size:16px;color:#858585;letter-spacing:0.519px;left:595.80px;">segmentados entre</div>
<div class="t" style="top:778.26px;font-size:16px;color:#111;font-weight:700;letter-spacing:0.313px;left:746.90px;">6 gerencias</div>
<div class="t" style="top:778.46px;font-size:16px;color:#111;font-weight:700;letter-spacing:0.464px;left:1438.10px;">24 empleados</div>
<div class="t" style="top:778.46px;font-size:16px;color:#858585;letter-spacing:0.495px;left:1554.70px;">segmentados entre</div>
<div class="t" style="top:778.46px;font-size:16px;color:#111;font-weight:700;letter-spacing:0.162px;left:1705.70px;">7 áreas</div>
<div class="t" style="top:861.86px;font-size:16px;color:#7a7a7a;letter-spacing:0.478px;-webkit-text-stroke:0.25px #7a7a7a;left:480.30px;">Buscar por nombre, documento</div>
<div class="t" style="top:861.66px;font-size:16px;color:#111;letter-spacing:0.419px;left:891.80px;">Todos los estados</div>
<div class="t" style="top:861.66px;font-size:16px;color:#111;letter-spacing:0.362px;left:1090.80px;">Todas las gerencias</div>
<div class="t" style="top:861.66px;font-size:16px;color:#111;letter-spacing:0.329px;left:1305.00px;">Todas las áreas</div>
<div class="t" style="top:861.66px;font-size:16px;color:#111;letter-spacing:0.501px;left:1485.00px;">Todos los puestos</div>
<div class="t" style="top:861.66px;font-size:16px;color:#111;letter-spacing:0.350px;left:1685.70px;">Todos los niveles</div>
<div class="t" style="top:944.75px;font-size:14px;color:#6b6b6b;font-weight:700;letter-spacing:0.096px;left:441.50px;">NOMBRE</div>
<div class="t" style="top:944.75px;font-size:14px;color:#6b6b6b;font-weight:700;letter-spacing:0.198px;left:665.50px;">DOCUMENTO</div>
<div class="t" style="top:944.75px;font-size:14px;color:#6b6b6b;font-weight:700;letter-spacing:-0.094px;left:822.20px;">LEGAJO</div>
<div class="t" style="top:944.75px;font-size:14px;color:#6b6b6b;font-weight:700;letter-spacing:-0.052px;left:936.80px;">PUESTO</div>
<div class="t" style="top:944.75px;font-size:14px;color:#6b6b6b;font-weight:700;letter-spacing:-0.217px;left:1208.60px;">ÁREA</div>
<div class="t" style="top:944.75px;font-size:14px;color:#6b6b6b;font-weight:700;letter-spacing:0.050px;left:1431.50px;">GERENCIA</div>
<div class="t" style="top:944.75px;font-size:14px;color:#6b6b6b;font-weight:700;letter-spacing:0.172px;left:1588.50px;">SENIORITY</div>
<div class="t" style="top:944.75px;font-size:14px;color:#6b6b6b;font-weight:700;letter-spacing:0.091px;left:1722.60px;">INGRESO</div>
<div class="t" style="top:1001.73px;font-size:16.5px;color:#111;letter-spacing:0.249px;-webkit-text-stroke:0.3px #111;left:441.50px;">Acosta, Gonzalo</div>
<div class="t" style="top:1001.73px;font-size:16.5px;color:#777;letter-spacing:0.286px;left:665.50px;">32678901</div>
<div class="t" style="top:1001.73px;font-size:16.5px;color:#777;letter-spacing:0.374px;left:822.20px;">HR-022</div>
<div class="t" style="top:1001.73px;font-size:16.5px;color:#777;letter-spacing:0.187px;left:936.80px;">Jefe de Equipo</div>
<div class="t" style="top:1001.73px;font-size:16.5px;color:#777;letter-spacing:0.086px;left:1208.60px;">Operaciones</div>
<div class="t" style="top:1001.73px;font-size:16.5px;color:#777;letter-spacing:0.086px;left:1431.50px;">Operaciones</div>
<div class="t" style="top:1001.73px;font-size:16.5px;color:#777;letter-spacing:0.123px;left:1588.50px;">Lead</div>
<div class="t" style="top:1001.73px;font-size:16.5px;color:#777;letter-spacing:1.442px;left:1722.60px;">15/05/2020</div>
<div class="t" style="top:1064.53px;font-size:16.5px;color:#111;letter-spacing:0.550px;left:441.50px;">Álvarez, Martina</div>
<div class="t" style="top:1064.53px;font-size:16.5px;color:#777;letter-spacing:0.286px;left:665.50px;">37000123</div>
<div class="t" style="top:1064.53px;font-size:16.5px;color:#777;letter-spacing:0.374px;left:822.20px;">HR-013</div>
<div class="t" style="top:1064.53px;font-size:16.5px;color:#777;letter-spacing:0.320px;left:936.80px;">Desarrolladora</div>
<div class="t" style="top:1064.53px;font-size:16.5px;color:#777;letter-spacing:0.219px;left:1208.60px;">Tecnología</div>
<div class="t" style="top:1064.53px;font-size:16.5px;color:#777;letter-spacing:0.219px;left:1431.50px;">Tecnología</div>
<div class="t" style="top:1064.53px;font-size:16.5px;color:#777;letter-spacing:0.384px;left:1588.50px;">Senior</div>
<div class="t" style="top:1064.53px;font-size:16.5px;color:#777;letter-spacing:1.442px;left:1722.60px;">01/03/2021</div>
</div></div>
</body></html>
